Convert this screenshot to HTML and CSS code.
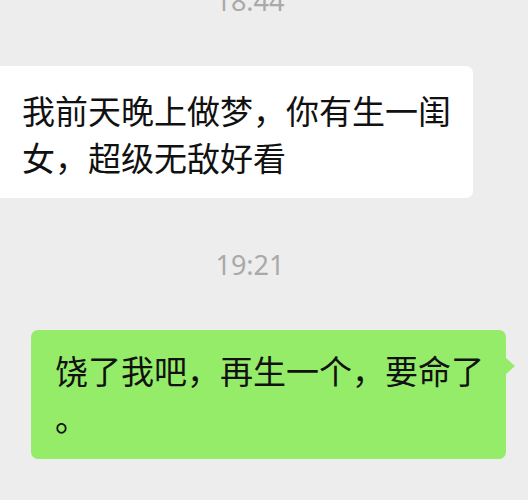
FILE: index.html
```html
<!DOCTYPE html>
<html lang="zh-CN">
<head>
<meta charset="UTF-8">
<meta name="viewport" content="width=device-width, initial-scale=1.0">
<title>聊天</title>
<link rel="stylesheet" href="styles.css">
</head>
<body>
<div class="chat">
    <div class="time time-first">18:44</div>

    <div class="row row-left">
        <div class="bubble bubble-in">我前天晚上做梦，你有生一闺女，超级无敌好看</div>
    </div>

    <div class="time">19:21</div>

    <div class="row row-right">
        <div class="bubble bubble-out">饶了我吧，再生一个，要命了。</div>
    </div>
</div>
</body>
</html>
```

FILE: styles.css
```css
body {
  margin: 0;
  background-color: #ededed;
  font-family: "Noto Sans CJK SC", "Noto Sans", sans-serif;
  color: #111;
  overflow: hidden;
}
.chat {
  display: flex;
  flex-direction: column;
}
.time {
  text-align: center;
  font-family: "Noto Sans", "Noto Sans CJK SC", sans-serif;
  font-size: 27px;
  line-height: 32px;
  color: #a9a9a9;
  margin: 51px 0 49px 0;
  padding-right: 28px;
}
.time-first {
  margin-top: -15px;
}
.row {
  display: flex;
}
.row-left {
  justify-content: flex-start;
}
.row-right {
  justify-content: flex-end;
  padding-right: 22px;
}
.bubble {
  position: relative;
  font-size: 33px;
  line-height: 47px;
  border-radius: 7px;
  box-sizing: border-box;
  line-break: anywhere;
}
.bubble-in {
  background-color: #fff;
  width: 485px;
  margin-left: -12px;
  padding: 21px 18px 17px 34px;
}
.bubble-out {
  background-color: #95ec69;
  width: 475px;
  padding: 17px 18px 18px 24px;
}
.bubble-out::after {
  content: "";
  position: absolute;
  right: -9px;
  top: 28px;
  border-left: 9px solid #95ec69;
  border-top: 8px solid transparent;
  border-bottom: 8px solid transparent;
}
```
